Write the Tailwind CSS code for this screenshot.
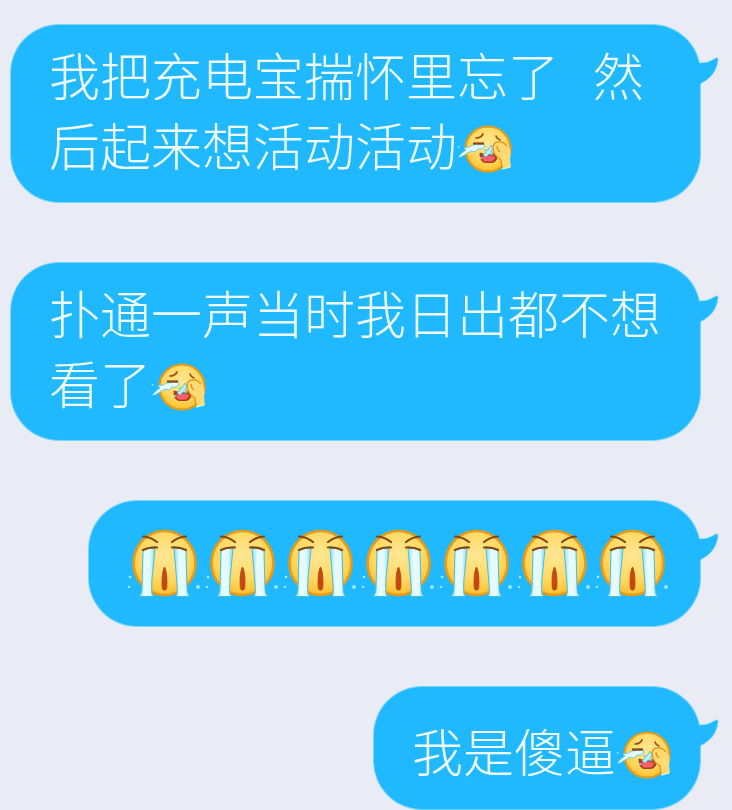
<!DOCTYPE html>
<html lang="zh-CN">
<head>
<meta charset="utf-8">
<meta name="viewport" content="width=device-width, initial-scale=1">
<title>聊天</title>
<script src="https://cdn.jsdelivr.net/npm/@tailwindcss/browser@4"></script>
</head>
<body class="bg-[#e9ecf5]">
<svg class="absolute size-0" aria-hidden="true">
  <defs>
    <radialGradient id="face" cx="50%" cy="38%" r="62%">
      <stop offset="0" stop-color="#ffe795"/><stop offset=".65" stop-color="#ffd860"/><stop offset="1" stop-color="#fdc02c"/>
    </radialGradient>
    <linearGradient id="tear" x1="0" x2="1" y1="0" y2="0">
      <stop offset="0" stop-color="#8de0f2"/><stop offset=".35" stop-color="#e9fcff"/><stop offset=".7" stop-color="#e0f9ff"/><stop offset="1" stop-color="#83d8ee"/>
    </linearGradient>
    <symbol id="sob" viewBox="0 0 78 70">
      <ellipse cx="39.5" cy="34" rx="31" ry="32" fill="url(#face)" stroke="#e79a18" stroke-width="2.6"/>
      <path d="M18 21 Q24 19 30 19 L28 40 Q26 55 27 65 L29 67.500 H14 Q17 65 17 58 Z" fill="url(#tear)" stroke="#45bfd9" stroke-width="1"/>
      <path d="M49 19 Q55 19 61 21 L62 58 Q62 65 65 67.500 H51 Q53 64 52 55 Z" fill="url(#tear)" stroke="#45bfd9" stroke-width="1"/>
      <g fill="none" stroke="#84470f" stroke-width="2.200" stroke-linecap="round">
        <path d="M18 7.500 Q26 8 32 13"/><path d="M61 7.500 Q53 8 47 13"/>
        <path d="M18 21 Q24 18 32 18.500"/><path d="M47 18.500 Q55 18 61 21"/>
      </g>
      <path d="M39.500 38 C42 42 42.500 54 41.500 60 Q39.500 62.500 37.500 60 C36.500 54 37 42 39.500 38Z" fill="#c94610" stroke="#a84a10" stroke-width=".8"/>
      <g fill="#9cebfb"><circle cx="5" cy="48" r="1.300"/><circle cx="4" cy="58" r="1.200"/><circle cx="73" cy="58" r="1.900"/></g>
    </symbol>
    <symbol id="laugh" viewBox="0 0 56 50">
      <circle cx="31" cy="25" r="22.500" fill="url(#face)" stroke="#e79a18" stroke-width="2.200"/>
      <path d="M19 14 Q24 14 26 10 M39 12 Q40 15 43 16" fill="none" stroke="#9a5212" stroke-width="1.700" stroke-linecap="round"/>
      <path d="M23 29 Q30 32 40 29 Q41 38 35 38.500 H28 Q23 38 23 29Z" fill="#b73a20" stroke="#9a4715" stroke-width="1"/>
      <path d="M25 33 Q32 30 38 33 Q37 37 34 37.500 H28 Q25.500 37 25 33Z" fill="#f66169"/>
      <path d="M34 21 L36 25 L34 28 L36 31 L32 30 L29 33 L26 31 L29 28 L28 26 L31 26Z" fill="#bceefa" stroke="#45bfd9" stroke-width=".8"/>
      <path d="M16 21 L27 20 L28 23 L25 25 L21 25 L18 28 L14 27 L9 30 L4 33 L1 33 L5 29 L9 26 L7 24 L12 23Z" fill="#e9fcff" stroke="#64d0e7" stroke-width="1"/>
      <path d="M16 19.500 H27" stroke="#84470f" stroke-width="2.200"/>
      <path d="M36 23 Q37 18 41 18 Q45 16 49 20 L53 25 Q54 30 53 35 L54 43 L46 45 L44 36 Q36 31 36 23Z" fill="#ffd971"/>
      <path d="M45 44 L44 36 Q36 31 36 23 Q37 18 41 18 Q46 17 50 22 M40 22 Q40 26 43 28" fill="none" stroke="#df951d" stroke-width="1.300"/>
      <path d="M45 45 L53 43" stroke="#c9f4dc" stroke-width="1.600"/>
      <circle cx="1.500" cy="23" r=".9" fill="#9cebfb"/><circle cx="24" cy="34" r="1" fill="#8de0f2"/>
    </symbol>
    <symbol id="tail" viewBox="0 0 22 28">
      <path d="M0 6 Q10 6.500 18 1 Q20 0 20 3 C19 13 13 22 2 27 H0Z" fill="#20b8ff"/>
      <path d="M2 6 Q10 6.500 18 1 Q20 0 20 3 C19 13 13 22 3 26" fill="none" stroke="#79d9fa" stroke-width=".8"/>
    </symbol>
  </defs>
</svg>
<main class="flex flex-col items-end gap-[61px] pt-[25px] pb-px pl-[11px] pr-8 font-['Noto_Sans_CJK_SC',sans-serif] text-[51px] leading-[70px] font-light text-[#effdff]">
  <article class="relative w-full rounded-[48px] bg-[#20b8ff] ring-1 ring-[#7ad6f8] pt-3.5 pb-[23px] pl-[38px] pr-7">
    <p>我把充电宝揣怀里忘了&nbsp;&nbsp;&nbsp;然后起来想活动活动<svg class="inline h-[50px] w-14 align-[-8px]" role="img" aria-label="笑哭"><use href="#laugh"/></svg></p>
    <svg class="absolute left-full top-8 -ml-0.5 h-7 w-[22px]" aria-hidden="true"><use href="#tail"/></svg>
  </article>
  <article class="relative w-full rounded-[48px] bg-[#20b8ff] ring-1 ring-[#7ad6f8] pt-3.5 pb-[23px] pl-[38px] pr-7">
    <p>扑通一声当时我日出都不想看了<svg class="inline h-[50px] w-14 align-[-8px]" role="img" aria-label="笑哭"><use href="#laugh"/></svg></p>
    <svg class="absolute left-full top-8 -ml-0.5 h-7 w-[22px]" aria-hidden="true"><use href="#tail"/></svg>
  </article>
  <article class="relative rounded-[48px] bg-[#20b8ff] ring-1 ring-[#7ad6f8] pt-7 pb-[27px] pl-9 pr-[29px]">
    <div class="flex" role="img" aria-label="大哭">
      <svg class="h-[70px] w-[78px]"><use href="#sob"/></svg>
      <svg class="h-[70px] w-[78px]"><use href="#sob"/></svg>
      <svg class="h-[70px] w-[78px]"><use href="#sob"/></svg>
      <svg class="h-[70px] w-[78px]"><use href="#sob"/></svg>
      <svg class="h-[70px] w-[78px]"><use href="#sob"/></svg>
      <svg class="h-[70px] w-[78px]"><use href="#sob"/></svg>
      <svg class="h-[70px] w-[78px]"><use href="#sob"/></svg>
    </div>
    <svg class="absolute left-full top-8 -ml-0.5 h-7 w-[22px]" aria-hidden="true"><use href="#tail"/></svg>
  </article>
  <article class="relative rounded-[48px] bg-[#20b8ff] ring-1 ring-[#7ad6f8] pt-7 pb-6 pl-[38px] pr-7">
    <p>我是傻逼<svg class="inline h-[50px] w-14 align-[-8px]" role="img" aria-label="笑哭"><use href="#laugh"/></svg></p>
    <svg class="absolute left-full top-8 -ml-0.5 h-7 w-[22px]" aria-hidden="true"><use href="#tail"/></svg>
  </article>
</main>
</body>
</html>
